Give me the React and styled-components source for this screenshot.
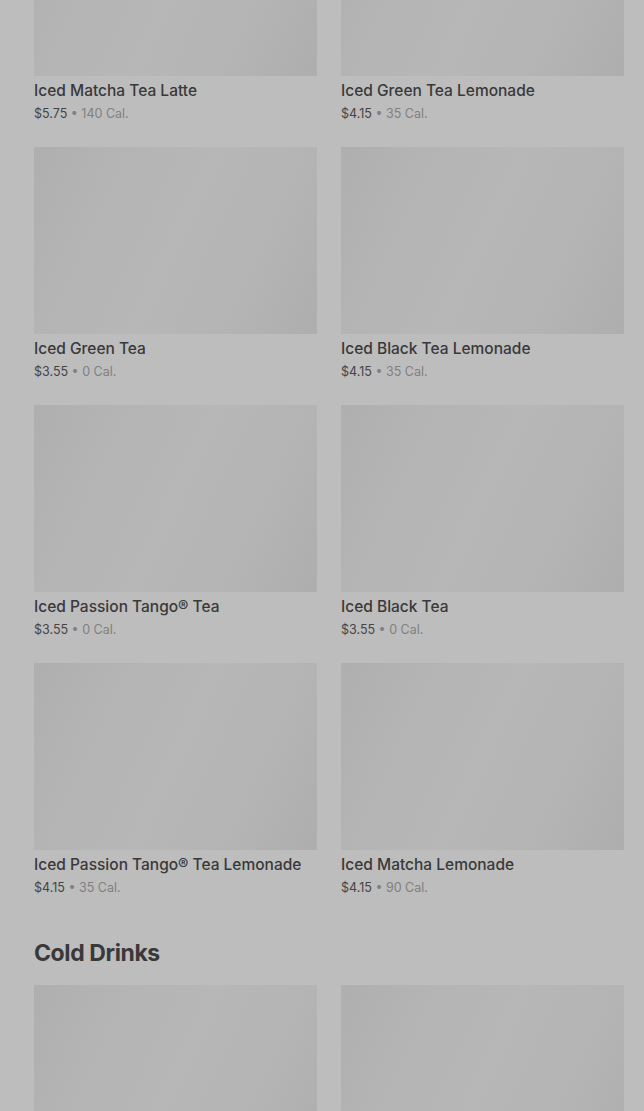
import styled, { createGlobalStyle } from 'styled-components';

const GlobalStyle = createGlobalStyle`
  html, body {
    margin: 0;
    padding: 0;
    background: #bdbdbd;
    overflow: hidden;
  }
`;

const teas = [
  { name: 'Iced Matcha Tea Latte', price: '$5.75', cal: '140 Cal.' },
  { name: 'Iced Green Tea Lemonade', price: '$4.15', cal: '35 Cal.' },
  { name: 'Iced Green Tea', price: '$3.55', cal: '0 Cal.' },
  { name: 'Iced Black Tea Lemonade', price: '$4.15', cal: '35 Cal.' },
  { name: 'Iced Passion Tango® Tea', price: '$3.55', cal: '0 Cal.' },
  { name: 'Iced Black Tea', price: '$3.55', cal: '0 Cal.' },
  { name: 'Iced Passion Tango® Tea Lemonade', price: '$4.15', cal: '35 Cal.' },
  { name: 'Iced Matcha Lemonade', price: '$4.15', cal: '90 Cal.' },
];

const coldDrinks = [{ name: '' }, { name: '' }];

const Page = styled.main`
  /* page is scrolled part-way down the menu */
  margin-top: -111px;
  padding: 0 20px 0 34px;
  font-family: Inter, 'Noto Sans', sans-serif;
  color: #3b3b3b;
`;

const Grid = styled.div`
  display: grid;
  grid-template-columns: 1fr 1fr;
  column-gap: 24px;
  row-gap: 23px;
`;

const Card = styled.div`
  display: flex;
  flex-direction: column;
`;

const Thumb = styled.div`
  height: 187px;
  background: linear-gradient(
    115deg,
    #afafaf 0%,
    #b4b4b4 25%,
    #b7b7b7 50%,
    #b4b4b4 75%,
    #aeaeae 100%
  );
`;

const Name = styled.div`
  margin-top: 5px;
  font-size: 15.5px;
  line-height: 20px;
  font-weight: 500;
  color: #393939;
`;

const Meta = styled.div`
  margin-top: 3px;
  font-size: 12.5px;
  line-height: 20px;
  color: #808080;

  & b {
    font-weight: 400;
    color: #444;
  }
`;

const SectionTitle = styled.h2`
  margin: 39px 0 16px;
  font-size: 23px;
  line-height: 32px;
  font-weight: 700;
  letter-spacing: -0.4px;
  color: #393939;
`;

const Item = ({ name, price, cal }) => (
  <Card>
    <Thumb />
    {name && <Name>{name}</Name>}
    {price && (
      <Meta>
        <b>{price}</b> • {cal}
      </Meta>
    )}
  </Card>
);

export default function App() {
  return (
    <>
      <GlobalStyle />
      <Page>
        <Grid>
          {teas.map((t) => (
            <Item key={t.name} {...t} />
          ))}
        </Grid>
        <SectionTitle>Cold Drinks</SectionTitle>
        <Grid>
          {coldDrinks.map((d, i) => (
            <Item key={i} {...d} />
          ))}
        </Grid>
      </Page>
    </>
  );
}
